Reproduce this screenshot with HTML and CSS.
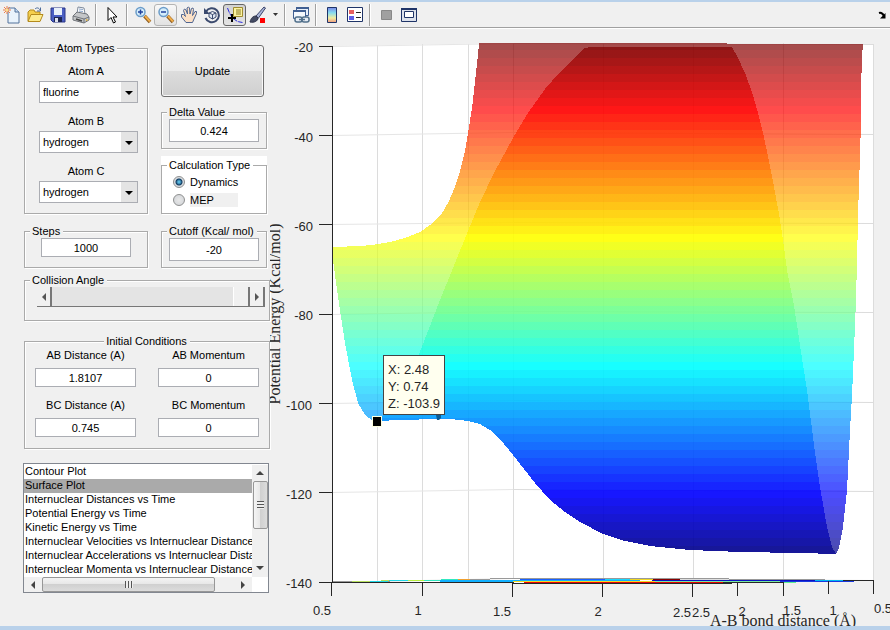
FILE: index.html
```
<!DOCTYPE html>
<html lang="en">
<head>
    <meta charset="UTF-8">
    <meta name="viewport" content="width=device-width, initial-scale=1.0">
    <title>Potential Energy Surface</title>
    <link rel="stylesheet" href="styles.css">
</head>
<body>
    <div class="toolbar" role="toolbar" aria-label="Figure toolbar">
        <button class="tool" aria-label="New figure">
            <svg viewBox="0 0 18 18"><path d="M5 2h7l4 4v11H5z" fill="#e9f3fc" stroke="#52729c"/><path d="M12 2v4h4" fill="#c3d9f0" stroke="#52729c"/><path d="M4 0v8M0 4h8M1 1l6 6M7 1L1 7" stroke="#ee7d4a" stroke-width="1"/><circle cx="4" cy="4" r="1.5" fill="#ffe08a"/></svg>
        </button>
        <button class="tool" aria-label="Open">
            <svg viewBox="0 0 18 18"><path d="M2 15V6l2-2h4l1 2h5v9z" fill="#f4cf4c" stroke="#b48a1c"/><path d="M2 15.5l3-7h12l-3 7z" fill="#fdec8e" stroke="#b48a1c"/><path d="M9 3c2-2 4-1 5 1M14.5 1.5V5H11" fill="none" stroke="#4a6a9a"/></svg>
        </button>
        <button class="tool" aria-label="Save">
            <svg viewBox="0 0 18 18"><path d="M2 2h14v14H4l-2-2z" fill="#4a5fc4" stroke="#2a3788"/><path d="M5 2h8v7H5z" fill="#e8f0fa"/><path d="M5 11h8v5H5z" fill="#1d2552"/><path d="M6 12h3v4H6z" fill="#dfe4f0"/></svg>
        </button>
        <button class="tool" aria-label="Print">
            <svg viewBox="0 0 18 18"><path d="M5 8l1-7 6 1 1 6z" fill="#fff" stroke="#7d8a9c"/><path d="M7 3l4 .5M7 5l4 .5" stroke="#8aa4c8"/><path d="M1 10l4-4 10 2 2 3v3l-5 3L1 14z" fill="#c4c6c8" stroke="#70747a"/><path d="M1 10l11 3 5-2M12 13v4" fill="none" stroke="#70747a"/><path d="M4 13l6 2" stroke="#444" stroke-width="1.5"/><path d="M14 14h1.5" stroke="#e8b020" stroke-width="1.5"/></svg>
        </button>
        <span class="sep"></span>
        <button class="tool" aria-label="Edit plot">
            <svg viewBox="0 0 18 18"><path d="M5 1.5v13l3-3 2.5 5.5 2-1-2.5-5h4z" fill="#fff" stroke="#000"/></svg>
        </button>
        <span class="sep"></span>
        <button class="tool" aria-label="Zoom in">
            <svg viewBox="0 0 18 18"><path d="M10.5 10l5.5 6" stroke="#8a5a20" stroke-width="3.5"/><path d="M11 10l5 5.5" stroke="#f0ac48" stroke-width="2"/><circle cx="6.5" cy="6" r="4.5" fill="#d4edfb" stroke="#6b9cc9" stroke-width="1.5"/><path d="M4 6h5M6.5 3.5v5" stroke="#20409c" stroke-width="1.5"/></svg>
        </button>
        <button class="tool hover" aria-label="Zoom out">
            <svg viewBox="0 0 18 18"><path d="M10.5 10l5.5 6" stroke="#8a5a20" stroke-width="3.5"/><path d="M11 10l5 5.5" stroke="#f0ac48" stroke-width="2"/><circle cx="6.5" cy="6" r="4.5" fill="#d4edfb" stroke="#6b9cc9" stroke-width="1.5"/><path d="M4 6h5" stroke="#20409c" stroke-width="1.5"/></svg>
        </button>
        <button class="tool" aria-label="Pan">
            <svg viewBox="0 0 18 18"><path d="M6 16.5L1.5 11V8.5h2l2 2-2-6 1-1.5 1.5 1 1.5 4-.5-6L8.5 1l1 1 .5 6 1.5-5.5 1.5-.5.5 1.5-1 6 2.5-4h1.5v2L14 13l-1.5 3.5z" fill="#fbe0c6" stroke="#4f6591"/></svg>
        </button>
        <button class="tool" aria-label="Rotate 3D">
            <svg viewBox="0 0 18 18"><path d="M3 5.5A7 7 0 1 1 2.5 12" fill="none" stroke="#3b4a6e" stroke-width="2"/><path d="M1 2v6h6z" fill="#3b4a6e"/><path d="M6 7l3.5-1.5L13 7v4l-3.5 2L6 11zM6 7l3.5 1.5L13 7M9.5 8.5V13" fill="#dfe6f2" stroke="#3b4a6e"/></svg>
        </button>
        <button class="tool active" aria-label="Data cursor">
            <svg viewBox="0 0 18 18"><path d="M1.5 2l2 5 3 5 5 3.5 5 1" fill="none" stroke="#2a2ae0" stroke-dasharray="5 1"/><path d="M7.500 1.5h9v9h-9z" fill="#fbf3a0" stroke="#a08c30"/><path d="M10 4h5M10 6h5M10 8h5" stroke="#8a7a2c"/><path d="M2 12h8M6 8v8" stroke="#000" stroke-width="2"/></svg>
        </button>
        <button class="tool" aria-label="Brush data">
            <svg viewBox="0 0 18 18"><path d="M7 10l8-9 1.5 1L9.5 12z" fill="#a9b5da" stroke="#3b4468"/><path d="M1 16c1-4 3-6 6-6l2 2c0 3-4 5-8 4z" fill="#444b63" stroke="#2c3248"/><path d="M11 12h5v5h-5z" fill="#f00"/></svg>
        </button>
        <button class="tool more" aria-label="Brush options">
            <svg viewBox="0 0 18 18"><path d="M7 7h5l-2.5 3z" fill="#333"/></svg>
        </button>
        <span class="sep"></span>
        <button class="tool" aria-label="Link plot">
            <svg viewBox="0 0 18 18"><path d="M4.5 1.5h12v8h-12z" fill="#e8f0fa" stroke="#405f92"/><path d="M4 2h13" stroke="#405f92" stroke-width="2"/><path d="M1.5 4.5h12v8h-12z" fill="#f4f8fd" stroke="#405f92"/><path d="M1 5h13" stroke="#405f92" stroke-width="2"/><rect x="3" y="11" width="7" height="5" rx="2" fill="#e6ecf4" stroke="#506f8a" stroke-width="1.5"/><rect x="10" y="11" width="7" height="5" rx="2" fill="#e6ecf4" stroke="#506f8a" stroke-width="1.5"/><path d="M7 13.5h6" stroke="#506f8a" stroke-width="1.5"/></svg>
        </button>
        <span class="sep"></span>
        <button class="tool" aria-label="Insert colorbar">
            <svg viewBox="0 0 18 18">
                <defs><linearGradient id="bar" x1="0" y1="0" x2="0" y2="1"><stop offset="0" stop-color="#7a86e8"/><stop offset=".35" stop-color="#86dcf0"/><stop offset=".7" stop-color="#f2eda0"/><stop offset="1" stop-color="#f09a80"/></linearGradient></defs>
                <path d="M4.5 1.5h9v15h-9z" fill="url(#bar)" stroke="#1f3468"/>
            </svg>
        </button>
        <button class="tool" aria-label="Insert legend">
            <svg viewBox="0 0 18 18"><path d="M1.5 1.5h15v14h-15z" fill="#fff" stroke="#1f3468"/><path d="M3 4h5v4H3z" fill="#e86060"/><path d="M3 10h5v4H3z" fill="#6060e8"/><path d="M10 6.5h5M10 11.5h5" stroke="#222"/></svg>
        </button>
        <span class="sep"></span>
        <button class="tool" aria-label="Hide plot tools">
            <svg viewBox="0 0 18 18"><path d="M4.5 4.5h10v9h-10z" fill="#a0a0a0" stroke="#888"/></svg>
        </button>
        <button class="tool" aria-label="Show plot tools">
            <svg viewBox="0 0 18 18"><path d="M1.5 2.5h15v13h-15z" fill="#dde2ec" stroke="#1f3468"/><path d="M1 3h16" stroke="#1f3468" stroke-width="2"/><path d="M4.5 5.5h9v6h-9z" fill="#fff" stroke="#1f3468"/></svg>
        </button>
        <button class="tool more dock" aria-label="Dock figure">
            <svg viewBox="0 0 18 18"><path d="M6 7c3-1 4 1 5 3" fill="none" stroke="#000" stroke-width="2"/><path d="M12.5 7v5.5H7z" fill="#000"/></svg>
        </button>
    </div>

    <div class="figure">
        <form class="sidebar">
            <div class="top">
                <fieldset class="panel atoms">
                    <legend class="center">Atom Types</legend>
                    <label for="atomA">Atom A</label>
                    <select id="atomA" class="combo"><option>fluorine</option></select>
                    <label for="atomB">Atom B</label>
                    <select id="atomB" class="combo"><option>hydrogen</option></select>
                    <label for="atomC">Atom C</label>
                    <select id="atomC" class="combo"><option>hydrogen</option></select>
                </fieldset>
                <div class="right">
                    <button type="button" class="update">Update</button>
                    <fieldset class="panel delta">
                        <legend><label for="delta">Delta Value</label></legend>
                        <input type="text" id="delta" class="tall" value="0.424">
                    </fieldset>
                    <div class="white">
                        <fieldset class="panel calc">
                            <legend>Calculation Type</legend>
                            <label class="choice"><input type="radio" name="calc" checked>Dynamics</label>
                            <label class="choice"><input type="radio" name="calc"><span class="gray">MEP</span></label>
                        </fieldset>
                    </div>
                </div>
                <fieldset class="panel">
                    <legend><label for="steps">Steps</label></legend>
                    <input type="text" id="steps" value="1000">
                </fieldset>
                <fieldset class="panel">
                    <legend><label for="cutoff">Cutoff (Kcal/ mol)</label></legend>
                    <input type="text" id="cutoff" class="tall" value="-20">
                </fieldset>
            </div>

            <fieldset class="panel angle">
                <legend><label for="angle">Collision Angle</label></legend>
                <div class="slider">
                    <button type="button" aria-label="Decrease"><svg viewBox="0 0 6 8"><path d="M5 0v8L1 4z"/></svg></button>
                    <input type="range" id="angle" min="0" max="180" value="180">
                    <button type="button" aria-label="Increase"><svg viewBox="0 0 6 8"><path d="M1 0v8l4-4z"/></svg></button>
                </div>
            </fieldset>

            <fieldset class="panel initial">
                <legend class="center">Initial Conditions</legend>
                <div class="conditions">
                    <div class="cond"><label for="abd">AB Distance (A)</label><input type="text" id="abd" value="1.8107"></div>
                    <div class="cond"><label for="abm">AB Momentum</label><input type="text" id="abm" value="0"></div>
                    <div class="cond"><label for="bcd">BC Distance (A)</label><input type="text" id="bcd" value="0.745"></div>
                    <div class="cond"><label for="bcm">BC Momentum</label><input type="text" id="bcm" value="0"></div>
                </div>
            </fieldset>

            <div class="listbox">
                <select size="8" aria-label="Plot type">
                    <option>Contour Plot</option>
                    <option selected>Surface Plot</option>
                    <option>Internuclear Distances vs Time</option>
                    <option>Potential Energy vs Time</option>
                    <option>Kinetic Energy vs Time</option>
                    <option>Internuclear Velocities vs Internuclear Distance</option>
                    <option>Internuclear Accelerations vs Internuclear Distance</option>
                    <option>Internuclear Momenta vs Internuclear Distance</option>
                </select>
                <div class="vbar"><i class="up"></i><span class="vthumb"></span><i class="down"></i></div>
                <div class="hbar"><i class="prev"></i><span class="hthumb"></span><i class="next"></i></div>
            </div>
        </form>

        <svg class="plot" viewBox="270 29 620 597" role="img" aria-label="Surface plot">
            <defs>
                <linearGradient id="jet" gradientUnits="userSpaceOnUse" x1="0" y1="42" x2="0" y2="554"></linearGradient>
            </defs>
            <path d="M332 46L513 43L873 44V580L692 584L332 582z" fill="#fff"/>

            <!-- grid -->
            <g class="grid">
                <path d="M377.5 45V581M422.5 44V580M468.5 44V579M513.5 43V578M603.5 43V579M693.5 43V579M783.5 43V580M873.5 44V580"/>
                <path class="faint" d="M332 46.5L513 43.5M332 135.5L513 132.5M332 224.5L513 222.5M332 314.5L513 311.5M332 403.5L513 400.5M332 492.5L513 489.5M332 582.5L513 578.5"/>
                <path d="M513 43.5L873 44.5M513 132.5L873 134.5M513 222.5L873 223.5M513 311.5L873 312.5M513 400.5L873 402.5M513 489.5L873 491.5M513 578.5L873 580.5"/>
            </g>

            <!-- far sheet, then the overlapping near sheet -->
            <path class="sheet" d="M333 247L361 246L375 244.500L390 242L405 238L420 232L430 225L441 215L449 201L455 187L460 171L465 151L468 133L472 108L475 82L478 55L479 43H620L834 44H863L862 57L861 90L861 117L860 160L859 180L858 220L857 260L856 300L854 350L852 395L850 430L847 490L843 527L839 548L836 554L800 553L740 552L690 550L650 546L625 541L603 534L580 522L565 512L550 500L535 483L513 455L500 439L490 430L480 424L468 421L450 419L437 419L400 420L377 421L372 420L365 415L358 403L352 380L345 343L338 297L333 260z"/>
            <path class="sheet" d="M591 47H732L737 56L745 73L752 92L758 113L763 133L768 156L774 187L779 214L783 240L787 270L793 300L797 325L801 352L807 390L814 445L820 487L824 510L827 527L832 547L836 554L800 553L740 552L690 550L650 546L625 541L603 534L580 522L565 512L550 500L535 483L513 455L500 439L490 430L480 424L468 421L450 419L437 419L400 420L377 421L386 413L400 390L419 354L430 326L440 300L453 268L468 231L480 202L495 171L513 138L528 113L545 89L560 72L584 48z"/>

            <!-- contour projected on the floor -->
            <g class="floor">
                <path d="M332 582L420 580.5L513 578.5H680L873 580.5" stroke="#999"/>
                <path d="M352 581.5L410 580.5" stroke="#b8e060"/>
                <path d="M370 581.5L408 580.5" stroke="#20d8e8"/>
                <path d="M408 580.5H424" stroke="#b8f040"/>
                <path d="M424 580.5L458 579.5" stroke="#30e8c0"/>
                <path d="M458 579.5H470" stroke="#f0a030"/>
                <path d="M440 580.5H640" stroke="#10b0ff" stroke-width="2"/>
                <path d="M520 579.5H605" stroke="#1860ff"/>
                <path d="M605 579.5H630" stroke="#18d8ff"/>
                <path d="M630 579.5H653" stroke="#f0d820"/>
                <path d="M653 579.5H680" stroke="#800"/>
                <path d="M652 580.5H815" stroke="#0a10c0"/>
                <path d="M815 580.5H843" stroke="#00b8f0"/>
                <path d="M513 581.5H655" stroke="#f4d820"/>
                <path d="M655 581.5H780" stroke="#78e8a0"/>
                <path d="M780 581.5H854" stroke="#1838e0"/>
                <path d="M524 582.5H732" stroke="#e80000"/>
                <path d="M783 582.5H796" stroke="#60f090"/>
            </g>

            <g class="axis">
                <path d="M332.5 46V582M319 46.5H332M319 135.5H332M319 224.5H332M319 314.5H332M319 403.5H332M319 492.5H332M319 582.5H513L513 583.5H732M723 582.5H783M843 580.5H873"/>
                <path d="M331.5 582V596M422.5 583V596M512.5 583V597M602.5 583V597M692.5 583V597M737.5 582V596M783.5 582V596M828.5 581V594M873.5 580V594"/>
            </g>

            <g class="ticks end">
                <text x="313" y="52">-20</text>
                <text x="313" y="142">-40</text>
                <text x="313" y="231">-60</text>
                <text x="313" y="320">-80</text>
                <text x="312" y="410">-100</text>
                <text x="312" y="499">-120</text>
                <text x="312" y="588">-140</text>
            </g>
            <g class="ticks">
                <text x="322" y="615">0.5</text>
                <text x="418" y="615">1</text>
                <text x="502" y="616">1.5</text>
                <text x="598" y="616">2</text>
                <text x="682" y="617">2.5</text>
                <text x="701" y="617">2.5</text>
                <text x="742" y="616">2</text>
                <text x="792" y="615">1.5</text>
                <text x="833" y="615">1</text>
                <text x="883" y="613">0.5</text>
            </g>
            <text class="title" x="783" y="626">A-B bond distance (Å)</text>
            <text class="title" transform="translate(280 314) rotate(-90)">Potential Energy (Kcal/mol)</text>

            <!-- data tip -->
            <path d="M436 415h5v3l-2 2h-2z" fill="#0c5c94"/>
            <rect x="372" y="416" width="10" height="11" fill="#ffffdf"/>
            <rect x="373" y="417" width="8" height="9" fill="#000"/>
            <rect x="383.5" y="355.5" width="61" height="59" fill="#ffffef" stroke="#444"/>
            <g class="tip">
                <text x="388" y="374">X: 2.48</text>
                <text x="388" y="391">Y: 0.74</text>
                <text x="388" y="408">Z: -103.9</text>
            </g>
        </svg>
    </div>
    <div class="bottom-edge"></div>

    <script>
        // jet colormap, 64 hard-edged bands from top (red) to bottom (blue)
        const jet = document.getElementById('jet');
        const n = 64;

        function channel(i, center) {
            const v = 1.5 - Math.abs(i + 1 - center) / 16;
            return Math.round(255 * Math.max(0, Math.min(1, v)));
        }

        function addStop(offset, color) {
            const stop = document.createElementNS('http://www.w3.org/2000/svg', 'stop');
            stop.setAttribute('offset', offset);
            stop.setAttribute('stop-color', color);
            jet.appendChild(stop);
        }

        for (let k = 0; k < n; k++) {
            const i = n - 1 - k;
            const color = `rgb(${channel(i, 48)}, ${channel(i, 32)}, ${channel(i, 16)})`;
            addStop(k / n, color);
            addStop((k + 1) / n, color);
        }
    </script>
</body>
</html>
```
FILE: styles.css
```
* { box-sizing: border-box; }
body {
    margin: 0;
    min-height: 100vh;
    display: flex;
    flex-direction: column;
    background: #f0f0f0;
    border-top: 2px solid #b9d1ea;
    font: 11px/14px "Liberation Sans", Arial, sans-serif;
    color: #000;
}
button, input, select { font: inherit; color: inherit; }

/* toolbar */
.toolbar {
    display: flex;
    align-items: center;
    height: 26px;
    border-bottom: 1px solid #a0a0a0;
}
.tool {
    width: 23px;
    height: 22px;
    padding: 0;
    border: 1px solid transparent;
    border-radius: 3px;
    background: none;
    display: flex;
    align-items: center;
    justify-content: center;
    flex: none;
}
.tool svg { width: 18px; height: 18px; flex: none; fill: none; }
.tool.hover { border-color: #b4b4b4; background: linear-gradient(#f8f8f8, #e2e2e2); }
.tool.active { border-color: #666; background: linear-gradient(#d2d2d2, #e4e4e4); }
.tool.more { width: 12px; }
.tool.dock { margin: 0 2px 0 auto; }
.sep {
    width: 2px;
    height: 22px;
    margin: 0 3px;
    background: #a0a0a0;
    border-right: 1px solid #fff;
}

/* layout */
.figure {
    display: flex;
    align-items: flex-start;
    border-top: 1px solid #fff;
}
.sidebar {
    flex: none;
    width: 270px;
    padding: 12px 0 0 24px;
}
.plot { flex: 1; min-width: 0; height: auto; display: block; }
.bottom-edge { height: 4px; margin-top: auto; background: #b9d1ea; }

/* panels */
.panel {
    min-width: 0;
    margin: 0;
    padding: 0 0 6px;
    border: 1px solid #aaa;
    box-shadow: 1px 1px 0 #fff, inset 1px 1px 0 #fff;
}
.panel legend {
    margin-left: 5px;
    padding: 0 3px 0 2px;
    background: #f0f0f0;
}
.panel legend.center { margin: 0 auto; }
.top {
    display: grid;
    grid-template-columns: 124px 106px;
    gap: 10px 13px;
}
.atoms { padding: 9px 0 10px; text-align: center; }
.atoms label { display: block; }
.combo {
    display: block;
    width: 99px;
    height: 22px;
    margin: 3px 9px 11px auto;
    padding: 0 0 0 3px;
    appearance: none;
    border: 1px solid #abadb3;
    border-radius: 0;
    background: #fff url("data:image/svg+xml,%3Csvg xmlns='http://www.w3.org/2000/svg' width='16' height='20'%3E%3Cpath d='M0 0h16v20H0z' fill='%23e4e4e4'/%3E%3Cpath d='M4 9h8l-4 4z'/%3E%3C/svg%3E") no-repeat right center;
}
.combo:last-child { margin-bottom: 0; }
.right { display: flex; flex-direction: column; }
.update {
    height: 52px;
    margin: 4px 3px 8px 0;
    border: 1px solid #707070;
    border-radius: 3px;
    background: linear-gradient(#f2f2f2, #ebebeb 50%, #dddddd 50%, #cfcfcf);
    box-shadow: inset 0 0 0 1px #f8f8f8;
}
.delta { margin-bottom: 7px; }
.panel input[type="text"] {
    display: block;
    width: 90px;
    height: 19px;
    margin: 0 auto;
    padding: 0;
    border: 1px solid #abadb3;
    background: #fff;
    text-align: center;
}
.panel input.tall { height: 23px; }
.white { padding-top: 2px; background: #fff; }
.calc { padding: 1px 0 4px; }
.calc legend { background: #fff; }
.choice { display: flex; align-items: center; height: 18px; padding-left: 11px; }
.choice input {
    appearance: none;
    width: 12px;
    height: 12px;
    margin: 0 5px 0 0;
    border: 1px solid #8e8f8f;
    border-radius: 50%;
    background: radial-gradient(#e8e8e8, #cfd2d6);
}
.choice input:checked { background: radial-gradient(circle, #58b8e0 0 1px, #103a60 3px, #d8dce0 4px); }
.choice .gray { width: 48px; background: #f0f0f0; }

/* collision angle */
.angle { margin-top: 5px; padding: 0 0 13px; }
.slider {
    display: flex;
    height: 20px;
    margin: 0 4px 0 12px;
    border-bottom: 1px solid #777;
}
.slider button {
    width: 15px;
    padding: 0;
    border: 0;
    border-right: 2px solid #777;
    background: #f0f0f0;
    line-height: 0;
}
.slider svg { width: 6px; height: 8px; fill: #555; }
.slider input {
    appearance: none;
    flex: 1;
    min-width: 0;
    height: 19px;
    margin: 0;
    background: #e4e4e4;
}
.slider input::-webkit-slider-thumb {
    appearance: none;
    width: 17px;
    height: 19px;
    border-left: 1px solid #fff;
    border-right: 2px solid #777;
    background: #f0f0f0;
}

/* initial conditions */
.initial { margin-top: 13px; padding: 0 10px 11px; }
.conditions {
    display: grid;
    grid-template-columns: 101px 101px;
    justify-content: space-between;
    gap: 11px 0;
    text-align: center;
}
.cond label { display: block; margin-bottom: 6px; }
.initial .cond input { width: 100%; }

/* plot list */
.listbox {
    display: grid;
    grid-template-columns: 1fr 16px;
    grid-template-rows: 112px 15px;
    width: 246px;
    margin: 14px 0 0 -1px;
    padding: 1px 0 0;
    border: 1px solid #828790;
    background: #fff;
}
.listbox select {
    min-width: 0;
    width: 100%;
    height: 112px;
    padding: 0;
    border: 0;
    outline: 0;
    overflow: hidden;
    scrollbar-width: none;
    background: #fff;
}
.listbox option {
    height: 14px;
    min-height: 14px;
    padding: 0 0 0 1px;
    overflow: hidden;
    line-height: 14px;
    color: #000;
}
.listbox option:checked { background: #aaa linear-gradient(#aaa, #aaa); }
.vbar, .hbar { display: flex; align-items: center; background: #f0f0f0; }
.vbar { flex-direction: column; }
.hbar { width: 228px; }
.vthumb, .hthumb {
    border: 1px solid #979797;
    border-radius: 2px;
    display: flex;
    align-items: center;
    justify-content: center;
}
.vthumb { width: 15px; height: 48px; background: linear-gradient(90deg, #f4f4f4, #e6e6e6 50%, #d0d0d0 50%, #dcdcdc); }
.hthumb { width: 173px; height: 15px; background: linear-gradient(#f4f4f4, #e6e6e6 50%, #d0d0d0 50%, #dcdcdc); }
.vthumb::after { content: ""; width: 7px; height: 8px; background: repeating-linear-gradient(#555 0 1px, #eee 1px 3px); }
.hthumb::after { content: ""; width: 8px; height: 7px; background: repeating-linear-gradient(90deg, #555 0 1px, #eee 1px 3px); }
.up, .down, .prev, .next { border: 4px solid transparent; }
.up { border-top: 0; border-bottom-color: #444; margin: 6px 0; }
.down { border-bottom: 0; border-top-color: #444; margin: auto 0 7px; }
.prev { border-left: 0; border-right-color: #444; margin: 0 7px; }
.next { border-right: 0; border-left-color: #444; margin: 0 7px 0 auto; }

/* plot */
.grid path { fill: none; stroke: #dcdcdc; }
.grid .faint { stroke: #e6e6e6; }
.sheet { fill: url(#jet); fill-opacity: 0.7; shape-rendering: crispEdges; }
.floor path, .axis path { fill: none; shape-rendering: crispEdges; }
.axis path { stroke: #262626; }
.ticks, .tip { font-size: 13px; fill: #262626; }
.ticks { text-anchor: middle; }
.ticks.end { text-anchor: end; }
.title {
    font: 16px "Liberation Serif", "Times New Roman", serif;
    text-anchor: middle;
    fill: #262626;
}
```
